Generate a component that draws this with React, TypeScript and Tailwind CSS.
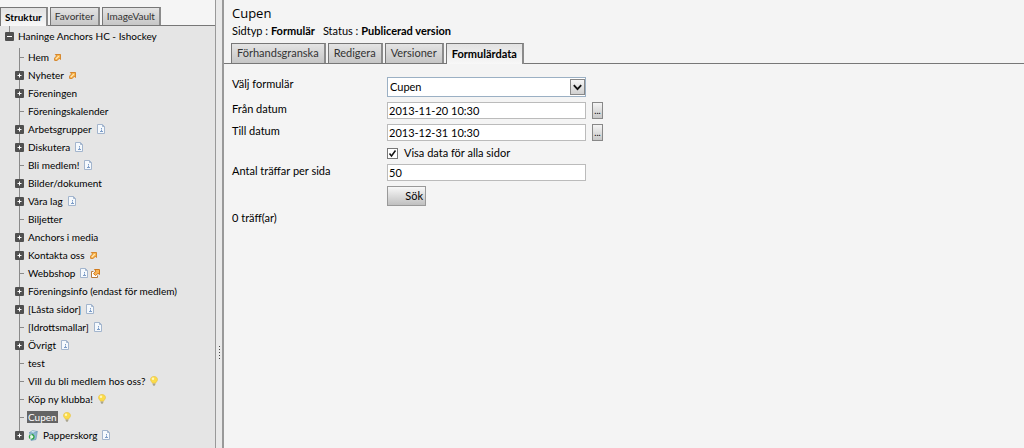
import React from 'react';

type IconKind = 'shortcut' | 'page' | 'newWindow' | 'bulb';

interface TreeItem {
  label: string;
  expandable?: boolean;
  selected?: boolean;
  trash?: boolean;
  icons?: IconKind[];
}

const items: TreeItem[] = [
  { label: 'Hem', icons: ['shortcut'] },
  { label: 'Nyheter', expandable: true, icons: ['shortcut'] },
  { label: 'Föreningen', expandable: true },
  { label: 'Föreningskalender' },
  { label: 'Arbetsgrupper', expandable: true, icons: ['page'] },
  { label: 'Diskutera', expandable: true, icons: ['page'] },
  { label: 'Bli medlem!', icons: ['page'] },
  { label: 'Bilder/dokument', expandable: true },
  { label: 'Våra lag', expandable: true, icons: ['page'] },
  { label: 'Biljetter' },
  { label: 'Anchors i media', expandable: true },
  { label: 'Kontakta oss', expandable: true, icons: ['shortcut'] },
  { label: 'Webbshop', icons: ['page', 'newWindow'] },
  { label: 'Föreningsinfo (endast för medlem)', expandable: true },
  { label: '[Låsta sidor]', expandable: true, icons: ['page'] },
  { label: '[Idrottsmallar]', icons: ['page'] },
  { label: 'Övrigt', expandable: true, icons: ['page'] },
  { label: 'test' },
  { label: 'Vill du bli medlem hos oss?', icons: ['bulb'] },
  { label: 'Köp ny klubba!', icons: ['bulb'] },
  { label: 'Cupen', selected: true, icons: ['bulb'] },
  { label: 'Papperskorg', expandable: true, trash: true, icons: ['page'] },
];

const Icon: React.FC<{ kind: IconKind }> = ({ kind }) => {
  if (kind === 'shortcut') {
    return (
      <svg width="7" height="7" viewBox="0 0 8 8" className="shrink-0">
        <path d="M1.500.600h6v5.600L6 5 3.400 7.400.700 7.300.700 4.700 3 2.200z" fill="#fbb84f" stroke="#d07a1c" strokeLinejoin="round" />
        <path d="M2 5.800 5.500 2.300" stroke="#ffe9bd" strokeWidth="1.200" />
      </svg>
    );
  }
  if (kind === 'newWindow') {
    return (
      <svg width="9" height="9" viewBox="0 0 9 9" className="shrink-0">
        <path d="M2.500 2.500h-2v6h6v-2" fill="#fff" stroke="#b57a3c" />
        <path d="M3.500.5h5v5L7 4.200 4.600 6.600 2.500 4.600 5 2.200z" fill="#fbb555" stroke="#d07a1c" strokeLinejoin="round" />
      </svg>
    );
  }
  if (kind === 'bulb') {
    return (
      <svg width="8" height="10" viewBox="0 0 8 10" className="shrink-0">
        <path d="M4 .4C1.800.4.5 1.900.5 3.500c0 1.700 1.400 2.300 1.900 3.700h3.200C6.100 5.800 7.500 5.200 7.500 3.500 7.500 1.900 6.200.4 4 .4z" fill="#fbdc4b" stroke="#e8bf3a" strokeWidth=".6" />
        <circle cx="3" cy="2.800" r="1.200" fill="#fff6bd" />
        <path d="M2.700 7.500h2.600v1.300l-.7.900H3.400l-.7-.9z" fill="#a9a48c" />
      </svg>
    );
  }
  return (
    <svg width="8" height="10" viewBox="0 0 8 10" className="shrink-0">
      <path d="M.5.500h5l2 2v7h-7z" fill="#f5f9fd" stroke="#a3b5cd" />
      <path d="M5.500.500v2h2" fill="none" stroke="#a3b5cd" />
      <path d="M4.500 4v1M4.500 5.500v2.500M3 7.500h3" stroke="#7d9dc8" />
    </svg>
  );
};

const TrashIcon: React.FC = () => (
  <svg width="10" height="11" viewBox="0 0 10 11" className="mr-[2px] shrink-0">
    <path d="M1.500 2.500 9.300 1.500 8 9.500 3 10.500z" fill="#8cb8d3" stroke="#6796b5" strokeWidth=".6" />
    <path d="M1.500 2.500 4.500.6 9.300 1.500 5.500 3z" fill="#d9ecf6" stroke="#6796b5" strokeWidth=".6" />
    <circle cx="3.700" cy="6.800" r="2.300" fill="#e8f8e6" stroke="#2fa344" strokeWidth="1.300" strokeDasharray="3.600 1.200" />
  </svg>
);

const Toggle: React.FC<{ open?: boolean; label: string }> = ({ open, label }) => (
  <button type="button" aria-label={label} className="z-10 flex size-[9px] shrink-0 items-center justify-center rounded-[1px] bg-[#505050]">
    <svg width="9" height="9" viewBox="0 0 9 9">
      <path d={open ? 'M2 4.500h5' : 'M2.500 4.500h4M4.500 2.500v4'} stroke="#fff" />
    </svg>
  </button>
);

const Tab: React.FC<{ label: string; active?: boolean; large?: boolean }> = ({ label, active, large }) => (
  <button
    type="button"
    role="tab"
    aria-selected={!!active}
    className={`shrink-0 border border-r-2 border-b-0 border-[#777] border-r-[#8b8b8b] whitespace-nowrap ${
      large ? 'px-[5px] text-[11px]' : 'px-1 text-[10px]'
    } ${
      active
        ? 'z-10 -mb-px bg-linear-to-b from-[#e2e2e2] to-[#f8f8f8] font-bold text-black'
        : 'bg-linear-to-b from-[#e4e4e4] to-[#c6c6c6] text-[#333]'
    }`}
  >
    {label}
  </button>
);

const TreeRow: React.FC<{ item: TreeItem; last: boolean }> = ({ item, last }) => (
  <li className="flex h-[18px] items-center">
    <div className="relative flex h-full w-[9px] shrink-0 items-center justify-center">
      <span className={`absolute top-0 left-1 w-px bg-[#8a8a8a] ${last ? 'h-2' : 'h-full'}`} />
      {item.expandable ? (
        <Toggle label={`Expandera ${item.label}`} />
      ) : (
        <span className="ml-auto h-px w-1 bg-[#8a8a8a]" />
      )}
    </div>
    <div className="ml-1 flex items-center gap-[3px]">
      {item.trash && <TrashIcon />}
      <a
        href="#"
        className={`mr-[2px] whitespace-nowrap leading-[12px] ${item.selected ? '-ml-px bg-[#646464] px-px text-white' : ''}`}
      >
        {item.label}
      </a>
      {item.icons?.map((kind) => <Icon key={kind} kind={kind} />)}
    </div>
  </li>
);

const Sidebar: React.FC = () => (
  <aside className="flex w-[216px] shrink-0 flex-col border-r border-[#999] bg-[#e5e5e5] text-[10px]">
    <div role="tablist" className="mt-0 flex h-[26px] items-stretch gap-[2px] border-b border-[#777] bg-[#f5f5f5] pt-[7px]">
      <Tab label="Struktur" active />
      <Tab label="Favoriter" />
      <Tab label="ImageVault" />
    </div>
    <div className="relative flex h-5 items-center gap-1 pl-[5px]">
      <span className="absolute top-0 left-[9px] h-[6px] w-px bg-[#8a8a8a]" />
      <Toggle open label="Fäll ihop" />
      <a href="#" className="whitespace-nowrap">Haninge Anchors HC - Ishockey</a>
    </div>
    <ul className="pt-[2px] pl-[15px]">
      {items.map((item, i) => (
        <TreeRow key={item.label} item={item} last={i === items.length - 1} />
      ))}
    </ul>
  </aside>
);

const Splitter: React.FC = () => (
  <div className="flex w-2 shrink-0 flex-col items-center gap-[2px] border-r-2 border-[#999] bg-[#e9e9e9] pt-[346px]">
    {[0, 1, 2, 3, 4].map((n) => <span key={n} className="size-px bg-[#444]" />)}
  </div>
);

const inputClass = 'w-[199px] border border-[#bbb] bg-white px-px text-[11px] leading-[15px] outline-none';

const DateField: React.FC<{ id: string; label: string; value: string }> = ({ id, label, value }) => (
  <div className="flex h-[22px] items-start">
    <label htmlFor={id} className="w-[155px] shrink-0">{label}</label>
    <input id={id} type="text" defaultValue={value} className={inputClass} />
    <button type="button" aria-label={`Välj ${label.toLowerCase()}`} className="ml-[6px] flex h-[17px] w-[11px] items-end justify-center border border-[#888] bg-linear-to-b from-[#f4f4f4] to-[#c8c8c8] text-[9px]">
      ...
    </button>
  </div>
);

const Main: React.FC = () => (
  <main className="min-w-0 flex-1 bg-[#f4f4f4] text-[11px]">
    <h1 className="pt-1 pl-2 font-['Open_Sans',sans-serif] text-[13px] leading-[18px]">Cupen</h1>
    <p className="flex gap-2 pt-[2px] pl-2 leading-[14px]">
      <span>Sidtyp : <b>Formulär</b></span>
      <span>Status : <b>Publicerad version</b></span>
    </p>
    <div role="tablist" className="mt-[5px] flex h-[21px] items-stretch gap-[2px] border-b border-[#777] pl-[7px]">
      <Tab label="Förhandsgranska" large />
      <Tab label="Redigera" large />
      <Tab label="Versioner" large />
      <Tab label="Formulärdata" large active />
    </div>
    <form className="pt-[13px] pl-2 leading-[14px]" onSubmit={(e) => e.preventDefault()}>
      <div className="flex h-[25px] items-start">
        <label htmlFor="form" className="w-[155px] shrink-0">Välj formulär</label>
        <div className="relative">
          <select id="form" className="h-5 w-[199px] appearance-none border border-[#9bb0c4] bg-white px-[2px] outline-none">
            <option>Cupen</option>
          </select>
          <span className="pointer-events-none absolute top-[2px] right-px flex h-4 w-[15px] items-center justify-center border border-[#888] bg-linear-to-b from-[#f6f6f6] to-[#d0d0d0]">
            <svg width="9" height="7" viewBox="0 0 9 7"><path d="M.8 1.200 4.500 5.200 8.200 1.200" fill="none" stroke="#111" strokeWidth="1.800" /></svg>
          </span>
        </div>
      </div>
      <DateField id="from" label="Från datum" value="2013-11-20 10:30" />
      <DateField id="to" label="Till datum" value="2013-12-31 10:30" />
      <div className="ml-[155px] flex h-[18px] items-center gap-[6px] pb-1">
        <span className="grid size-[11px] place-items-center">
          <input id="all" type="checkbox" defaultChecked className="peer col-start-1 row-start-1 size-[11px] appearance-none border border-[#777] bg-white" />
          <svg width="9" height="9" viewBox="0 0 9 9" className="pointer-events-none invisible col-start-1 row-start-1 peer-checked:visible">
            <path d="M1.500 4.500 3.500 7 7.500 1.500" fill="none" stroke="#111" strokeWidth="1.500" />
          </svg>
        </span>
        <label htmlFor="all">Visa data för alla sidor</label>
      </div>
      <div className="flex h-[22px] items-start">
        <label htmlFor="hits" className="w-[155px] shrink-0">Antal träffar per sida</label>
        <input id="hits" type="text" defaultValue="50" className={inputClass} />
      </div>
      <button type="submit" className="ml-[155px] block h-5 w-[39px] border border-[#999] bg-linear-to-b from-[#f8f8f8] to-[#c0c0c0] pr-[2px] text-right">
        Sök
      </button>
      <p className="pt-[5px]">0 träff(ar)</p>
    </form>
  </main>
);

const App: React.FC = () => (
  <div className="flex min-h-screen bg-[#f4f4f4] font-['Lato','Open_Sans',sans-serif] text-black">
    <Sidebar />
    <Splitter />
    <Main />
  </div>
);

export default App;
